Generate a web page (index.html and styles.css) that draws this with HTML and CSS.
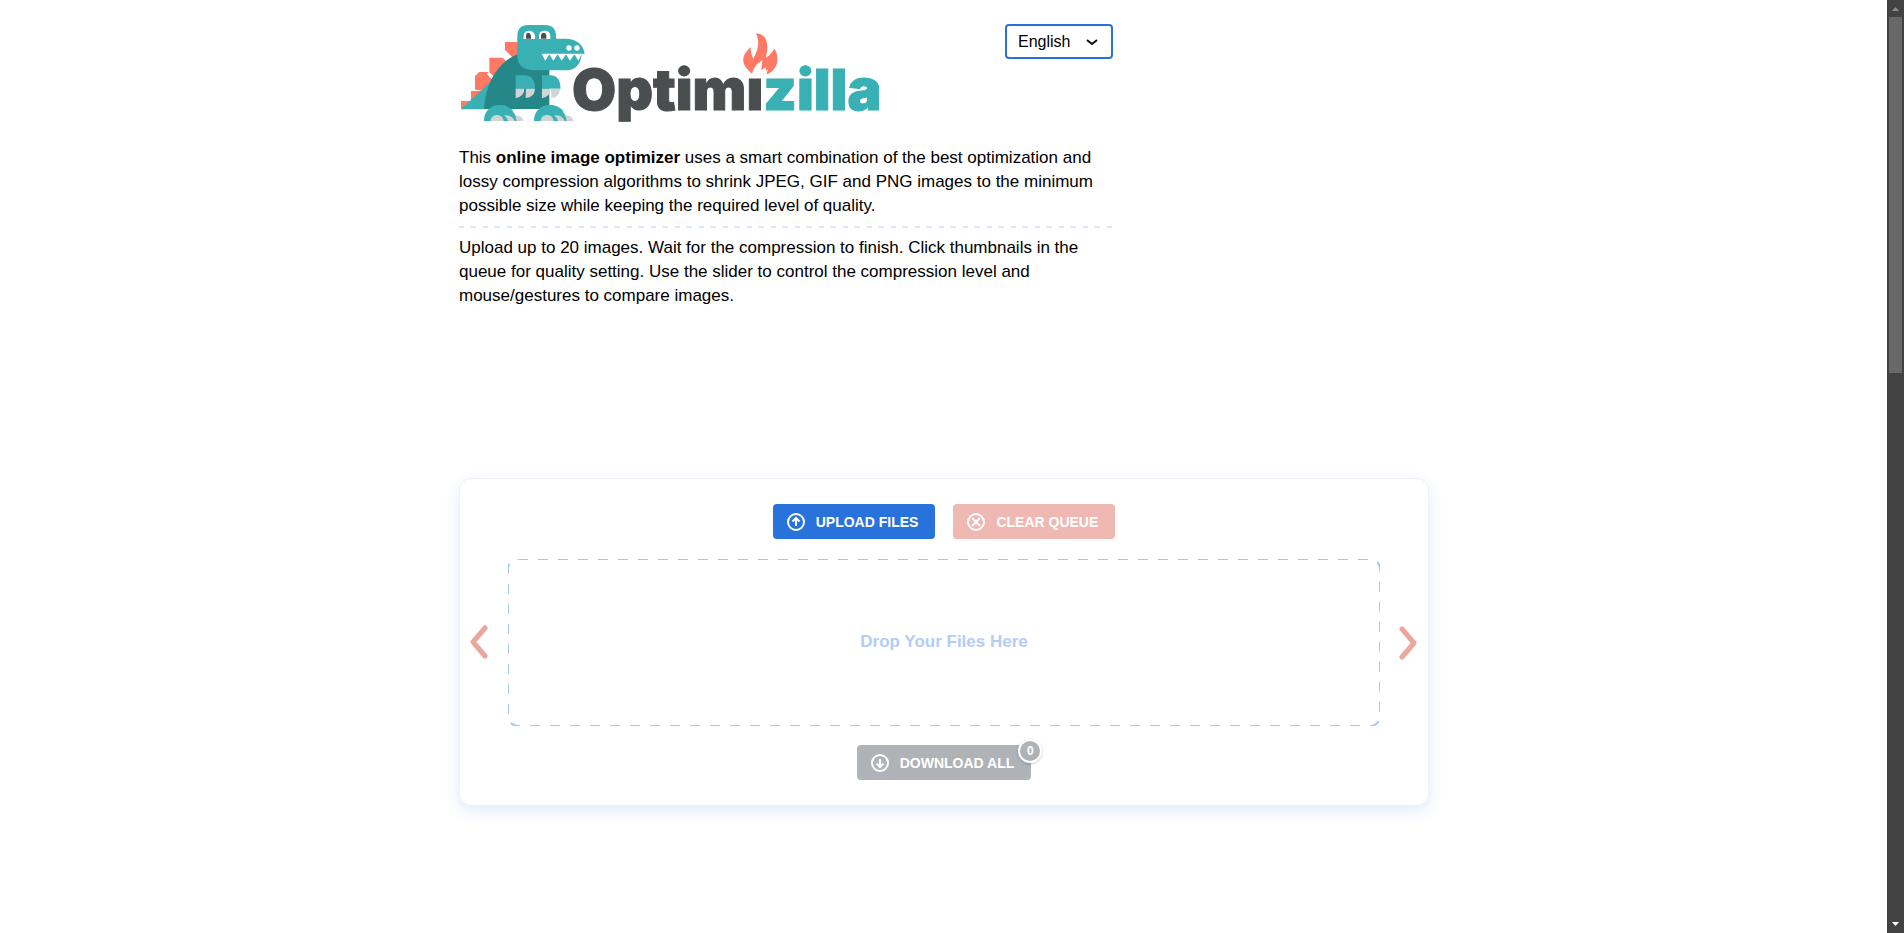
FILE: index.html
```html
<!DOCTYPE html>
<html lang="en">
<head>
<meta charset="utf-8">
<meta name="viewport" content="width=device-width, initial-scale=1">
<title>Optimizilla</title>
<link rel="stylesheet" href="styles.css">
</head>
<body>
<div class="viewport">
  <main class="page">
    <section class="intro">
      <header class="masthead">
        <a class="logo" href="#" aria-label="Optimizilla">
          <svg class="logo-art" viewBox="0 0 430 98" aria-hidden="true">
            <g transform="translate(-9 -9) scale(.3333)">
              <path fill="#ff7964" d="M165 81h44v55h-12l-32-31zM118 128h40l13 13-38 56-15-14zM75 184l12-13h33l15 14-30 43-30-4zM63 228h40v28H63zM33 258h30v24H33z"/>
              <path fill="#fff" d="M158 125l7-4 14 15-8 5zM110 176l7-5 16 15-8 7z"/>
              <path fill="#38b0b4" d="M33 283L126 196v87z"/>
              <path fill="#268789" d="M102 283c4-75 39-141 101-166h95v166z"/>
              <path fill="#38b0b4" d="M202 64q0-34 34-34h48q34 0 34 34v7h28c32 0 55 17 58 46h-9c-2 29-18 49-46 49H254q-52 0-52-46z"/>
              <path fill="#fff" d="M221 72V62q1-15 16-15t18 15v10zM267 72V62q1-15 17-15t17 15v10z"/>
              <path fill="#4a4e4f" d="M228 71v-9q1-9 7-9t8 9v9zM273 71v-9q1-9 8-9t8 9v9z"/>
              <path fill="#fff" d="M275 116h126l-6 2-10 19-11-18h-2l-12 18-11-18h-2l-12 18-11-18h-2l-12 18-11-18h-2l-11 18z"/>
              <circle cx="357" cy="99" r="8" fill="#fff"/><circle cx="381" cy="99" r="8" fill="#fff"/>
              <path fill="#38b0b4" d="M197 181h30q28 3 28 40h-58zM276 181h30q25 3 26 40h-56z"/>
              <path fill="#d1d4d5" d="M197 221h26q1 21-26 29zM228 221h27q-1 26-28 28zM276 221h26q1 21-26 29zM303 221h27q-1 26-26 28z"/>
              <path fill="#d1d4d5" d="M185 300q32-2 36 18h-50zM335 300q32-2 36 18h-50z"/>
              <path fill="#38b0b4" d="M102 318c-1-62 90-66 98 0zM252 318c-1-62 90-66 98 0z"/>
              <path fill="#d1d4d5" d="M122 318c1-24 37-24 39 0zM162 301q25-2 32 17h-20q-1-9-12-17zM272 318c1-24 37-24 39 0zM312 301q25-2 32 17h-20q-1-9-12-17z"/>
              <path fill="#fff" d="M101 283h30v4h-20zM171 283h108v4H180z"/>
              <path fill="#38b0b4" d="M110 288q18-18 40-18t40 18zM261 288q18-18 40-18t40 18z"/>
            </g>
            <text class="wordmark" x="113" y="86"><tspan class="wordmark-dark">Optimı</tspan><tspan class="wordmark-teal">zilla</tspan></text>
            <path fill="#ff7964" transform="translate(101 -4) scale(.3333)" d="M588 40c34 3 39 31 30 73 9-5 18-16 25-27 15 19 11 53-5 66-6 5-10 8-18 11l4-17-6 7v-12l-14 10c1-11 3-20 3-30-16 9-24 20-31 40-36-29-33-54-4-80 0 14 2 24 8 35 16-28 19-52 8-76z"/>
          </svg>
        </a>
        <div class="language">
          <select aria-label="Language"><option>English</option></select>
          <svg class="language-arrow" viewBox="0 0 12 8" aria-hidden="true"><path d="M1 2l5 4 5-4"/></svg>
        </div>
      </header>
      <p>This <strong>online image optimizer</strong> uses a smart combination of the best optimization and lossy compression algorithms to shrink JPEG, GIF and PNG images to the minimum possible size while keeping the required level of quality.</p>
      <div class="divider"></div>
      <p>Upload up to 20 images. Wait for the compression to finish. Click thumbnails in the queue for quality setting. Use the slider to control the compression level and mouse/gestures to compare images.</p>
    </section>

    <section class="uploader">
      <div class="actions">
        <button class="button upload" type="button">
          <svg viewBox="0 0 18 18" aria-hidden="true"><circle cx="9" cy="9" r="8"/><path d="M9 13V5.500M5.500 8.500L9 5l3.500 3.500"/></svg>
          UPLOAD FILES
        </button>
        <button class="button clear" type="button">
          <svg viewBox="0 0 18 18" aria-hidden="true"><circle cx="9" cy="9" r="8"/><path d="M5 5l8 8M13 5l-8 8"/></svg>
          CLEAR QUEUE
        </button>
      </div>
      <div class="carousel">
        <button class="arrow" type="button" aria-label="Previous"><svg viewBox="0 0 18 34" aria-hidden="true"><path d="M15 3L3 17l12 14"/></svg></button>
        <div class="dropzone">
          <svg class="dropzone-border" aria-hidden="true"><rect width="100%" height="100%" rx="10"/></svg>
          Drop Your Files Here
        </div>
        <button class="arrow" type="button" aria-label="Next"><svg viewBox="0 0 18 34" aria-hidden="true"><path d="M3 3l12 14L3 31"/></svg></button>
      </div>
      <div class="actions">
        <button class="button download" type="button">
          <svg viewBox="0 0 18 18" aria-hidden="true"><circle cx="9" cy="9" r="8"/><path d="M9 5v7.500M5.500 9.500L9 13l3.500-3.500"/></svg>
          DOWNLOAD ALL
          <span class="badge">0</span>
        </button>
      </div>
    </section>
  </main>
  <div class="scrollbar" aria-hidden="true">
    <svg class="scroll-arrow" viewBox="0 0 17 17"><path fill="#8b8b8b" d="M5 11h7L8.500 7z"/></svg>
    <div class="scroll-track"><div class="scroll-thumb"></div></div>
    <svg class="scroll-arrow" viewBox="0 0 17 17"><path fill="#fff" d="M5 6h7l-3.500 4z"/></svg>
  </div>
</div>
</body>
</html>
```

FILE: styles.css
```css
* {
  box-sizing: border-box;
}

body {
  margin: 0;
  background: #fff;
  color: #000;
  font: 16px/24px "Liberation Sans", Arial, sans-serif;
}

.viewport {
  display: flex;
  height: 100vh;
  overflow: hidden;
}

.page {
  flex: 1;
  padding: 24px 16px 24px 17px;
}

.intro,
.uploader {
  max-width: 970px;
  margin: 0 auto;
}

.intro {
  padding-right: 316px;
}

.masthead {
  display: flex;
  justify-content: space-between;
  align-items: flex-start;
  margin-bottom: 24px;
}

.logo-art {
  display: block;
  width: 430px;
  height: 98px;
  overflow: visible;
}

.wordmark {
  font-family: Inter, sans-serif;
  font-size: 57px;
  font-weight: 900;
}

.wordmark-dark {
  fill: #4a4e4f;
  stroke: #4a4e4f;
}

.wordmark-teal {
  fill: #38b0b4;
  stroke: #38b0b4;
}

.language {
  position: relative;
}

.language select {
  display: block;
  width: 108px;
  height: 35px;
  padding: 0 0 0 11px;
  border: 2px solid #2873db;
  border-radius: 4px;
  background: #fff;
  color: #000;
  font: inherit;
  appearance: none;
}

.language-arrow {
  position: absolute;
  top: 14px;
  right: 15px;
  width: 12px;
  height: 8px;
  fill: none;
  stroke: #111;
  stroke-width: 2;
  pointer-events: none;
}

.intro p {
  margin: 0;
  font-size: 17px;
}

.divider {
  height: 2px;
  margin: 8px 0;
  background: repeating-linear-gradient(90deg, #dae6f9 0 5px, transparent 5px 12px);
}

.uploader {
  margin-top: 170px;
  padding: 25px 0;
  border: 1px solid #eef0f4;
  border-radius: 12px;
  box-shadow: 0 5px 16px rgba(40, 115, 219, 0.14);
}

.actions {
  display: flex;
  justify-content: center;
  gap: 18px;
}

.button {
  position: relative;
  display: flex;
  align-items: center;
  gap: 11px;
  height: 35px;
  padding: 0 17px 0 14px;
  border: 0;
  border-radius: 4px;
  color: #fff;
  font: bold 14px/20px "Liberation Sans", Arial, sans-serif;
}

.button svg {
  width: 18px;
  height: 18px;
  fill: none;
  stroke: #fff;
  stroke-width: 2;
}

.upload {
  background: #2873db;
}

.clear {
  background: #efb8b2;
}

.download {
  background: #afb3b8;
}

.badge {
  position: absolute;
  top: -6px;
  right: -11px;
  width: 24px;
  height: 24px;
  border: 2px solid #fff;
  border-radius: 50%;
  background: #afb3b8;
  box-shadow: 0 1px 3px rgba(0, 0, 0, 0.2);
  font-size: 12px;
  text-align: center;
}

.carousel {
  display: flex;
  align-items: center;
  margin: 20px 0 19px;
}

.arrow {
  display: flex;
  justify-content: center;
  width: 48px;
  padding: 0 10px 2px 0;
  border: 0;
  background: none;
}

.arrow:last-child {
  padding: 0 0 0 8px;
}

.arrow svg {
  width: 18px;
  height: 34px;
  fill: none;
  stroke: #eba69d;
  stroke-width: 5;
  stroke-linecap: round;
  stroke-linejoin: round;
}

.dropzone {
  position: relative;
  display: flex;
  flex: 1;
  align-items: center;
  justify-content: center;
  min-height: 167px;
  padding-bottom: 2px;
  color: #b2cef4;
  font-size: 17px;
  font-weight: bold;
}

.dropzone-border {
  position: absolute;
  inset: 0;
  width: 100%;
  height: 100%;
  overflow: hidden;
}

.dropzone-border rect {
  fill: none;
  stroke: #a9c6ee;
  stroke-width: 2;
  stroke-dasharray: 10 10;
}

.scrollbar {
  display: flex;
  flex-direction: column;
  width: 17px;
  background: #424242;
}

.scroll-arrow {
  width: 17px;
  height: 17px;
}

.scroll-track {
  flex: 1;
  padding: 0 2px;
}

.scroll-thumb {
  height: 356px;
  background: #686868;
}
```
